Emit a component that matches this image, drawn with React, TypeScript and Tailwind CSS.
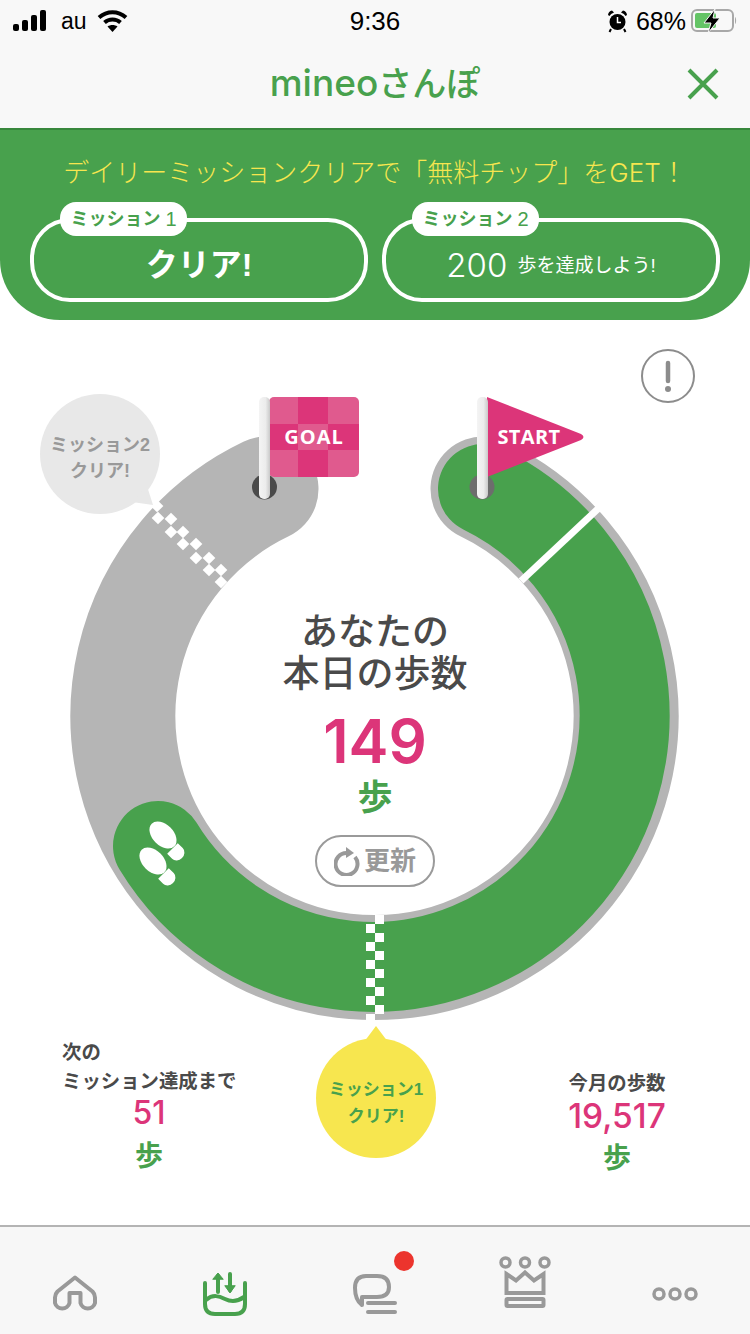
const green = '#48a14d'
const pink = '#dc3579'

// checker squares on the mission 2 line, picked off the picture
const diagonalChecks = [
  [157, 506], [171, 519], [183, 532], [196, 544], [209, 558], [221, 570],
  [158, 518], [171, 532], [183, 544], [196, 558], [209, 570], [221, 582],
]
const bottomChecks = [
  [366, 924], [366, 942], [366, 960], [366, 978], [366, 996], [366, 1014],
  [375, 915], [375, 933], [375, 951], [375, 969], [375, 987], [375, 1005],
]

function StatusBar() {
  return (
    <div className="relative flex h-[42px] items-center justify-between pl-[13px] pr-[13px] text-black">
      <div className="flex items-center">
        <svg width="34" height="22" viewBox="0 0 34 22" fill="#000">
          <rect x="0" y="14" width="6" height="7" rx="2" />
          <rect x="9" y="10" width="6" height="11" rx="2" />
          <rect x="18" y="5" width="6" height="16" rx="2" />
          <rect x="27" y="0" width="6" height="21" rx="2" />
        </svg>
        <span className="ml-[14px] text-[23px] leading-none">au</span>
        <svg className="ml-[10px]" width="31" height="24" viewBox="0 0 31 24" fill="none" stroke="#000" strokeWidth="4">
          <path d="M2 8.5C10 1.5 21 1.5 29 8.5" />
          <path d="M7.5 13.5C12 9.5 19 9.5 23.5 13.5" />
          <path d="M15.5 23L10.5 17.5C13.5 15.5 17.5 15.5 20.5 17.5Z" fill="#000" stroke="none" />
        </svg>
      </div>
      <span className="absolute left-0 right-0 text-center text-[26px] font-medium leading-none">9:36</span>
      <div className="flex items-center">
        <svg width="21" height="24" viewBox="0 0 21 24" fill="#000">
          <circle cx="10.5" cy="13" r="8" />
          <path d="M1 6Q1.5 2 5 1.5L7 3.5Q3.5 4.5 2.5 7Z" />
          <path d="M20 6Q19.5 2 16 1.5L14 3.5Q17.5 4.5 18.5 7Z" />
          <path d="M4 20L2.5 23M17 20L18.5 23" stroke="#000" strokeWidth="2" />
          <path d="M10.5 8V13.5H14" fill="none" stroke="#fff" strokeWidth="1.5" />
        </svg>
        <span className="ml-[8px] text-[25px] leading-none">68%</span>
        <svg className="ml-[5px]" width="46" height="24" viewBox="0 0 46 24">
          <rect x="1" y="1" width="41" height="21" rx="5" fill="none" stroke="#a8a8a8" strokeWidth="2" />
          <rect x="4" y="4" width="21" height="15" rx="2" fill="#64c466" />
          <path d="M44 8C45.5 9 45.5 14 44 15Z" fill="#a8a8a8" />
          <path d="M24 0L13 14H20L17 24L29 9H22Z" fill="#000" stroke="#f8f8f8" strokeWidth="1" />
        </svg>
      </div>
    </div>
  )
}

function MissionBox({ label, num, children }: { label: string; num: string; children: React.ReactNode }) {
  return (
    <div className="relative flex h-[84px] flex-1 items-center justify-center rounded-[40px] border-[4px] border-white pt-[10px] text-white">
      <div className="absolute left-[26px] top-[-20px] flex h-[34px] w-[127px] items-center justify-center rounded-[16px] bg-white text-[#48a14d]">
        <span className="text-[18px] font-bold leading-none">{label}</span>
        <span className="ml-[5px] text-[20px] leading-none">{num}</span>
      </div>
      {children}
    </div>
  )
}

function Track() {
  return (
    <svg className="absolute inset-0" width="750" height="710" viewBox="0 320 750 710">
      {/* course */}
      <path d="M483 489A251.6 251.6 0 1 1 266 489" fill="none" stroke="#b5b5b5" strokeWidth="105" strokeLinecap="round" />
      <path d="M483 489A251.6 251.6 0 1 1 158 846" fill="none" stroke={green} strokeWidth="90" strokeLinecap="round" />
      <path d="M521 581L601 506" stroke="#fff" strokeWidth="7" />

      {bottomChecks.map(([x, y]) => (
        <rect key={`${x}-${y}`} x={x} y={y} width="9" height="9" fill="#fff" />
      ))}
      {diagonalChecks.map(([x, y]) => (
        <rect key={`${x}-${y}`} x={x - 4.5} y={y - 4.5} width="9" height="9" fill="#fff" transform={`rotate(45 ${x} ${y})`} />
      ))}

      {/* mission 2 bubble */}
      <circle cx="100" cy="454" r="60" fill="#e8e8e8" />
      <path d="M147 486L153 505L132 502Z" fill="#e8e8e8" />
      <text x="100" y="451" textAnchor="middle" fontSize="18" fontWeight="700" fill="#999">ミッション2</text>
      <text x="100" y="477" textAnchor="middle" fontSize="18" fontWeight="700" fill="#999">クリア!</text>

      {/* feet */}
      <g fill="#fff">
        <ellipse cx="163" cy="835" rx="16" ry="10.5" transform="rotate(45 163 835)" />
        <ellipse cx="153" cy="861" rx="16" ry="10.5" transform="rotate(45 153 861)" />
        <path d="M-5 -7.5H2A6.5 7.5 0 0 1 2 7.5H-5Z" transform="translate(176 852) rotate(45)" />
        <path d="M-5 -7.5H2A6.5 7.5 0 0 1 2 7.5H-5Z" transform="translate(167 877) rotate(45)" />
      </g>

      {/* goal flag */}
      <circle cx="264.5" cy="487" r="12.5" fill="#4a4a4a" />
      <rect x="269" y="397" width="90" height="80" rx="5" fill="#e05a8e" />
      <rect x="298" y="397" width="30" height="27" fill={pink} />
      <rect x="298" y="450" width="30" height="27" fill={pink} />
      <rect x="269" y="424" width="29" height="26" fill={pink} />
      <rect x="328" y="424" width="31" height="26" fill={pink} />
      <text x="314" y="444" textAnchor="middle" fontSize="20" fontWeight="700" fill="#fff" fontFamily="Open Sans" letterSpacing="1">GOAL</text>
      <rect x="259" y="397" width="11" height="102" rx="5" fill="url(#pole)" />

      {/* start flag */}
      <circle cx="482" cy="487" r="12.5" fill="#6d6d6d" />
      <path d="M487 397L581 434Q586 437 581 440L487 477Z" fill={pink} />
      <text x="529" y="444" textAnchor="middle" fontSize="20" fontWeight="700" fill="#fff" fontFamily="Open Sans" letterSpacing="0.4">START</text>
      <rect x="477" y="397" width="11" height="102" rx="5" fill="url(#pole)" />

      {/* info */}
      <circle cx="668" cy="376" r="26" fill="none" stroke="#8c8c8c" strokeWidth="2" />
      <path d="M668 363V381" stroke="#8c8c8c" strokeWidth="4.5" strokeLinecap="round" />
      <circle cx="668" cy="389" r="3" fill="#8c8c8c" />

      <defs>
        <linearGradient id="pole" x1="0" x2="1" y1="0" y2="0">
          <stop offset="0" stopColor="#f4f4f4" />
          <stop offset="0.6" stopColor="#ececec" />
          <stop offset="1" stopColor="#c9c9c9" />
        </linearGradient>
      </defs>
    </svg>
  )
}

function TabBar() {
  return (
    <div className="grid h-[109px] grid-cols-5 justify-items-center border-t-2 border-[#b4b4b4] bg-[#f7f7f7]">
      <svg className="mt-[48px]" width="44" height="40" viewBox="0 0 44 40" fill="none" stroke="#999" strokeWidth="4" strokeLinejoin="round">
        <path d="M22 2.5L39.5 16.5Q42 19 42 22.5V28A7.5 7.5 0 0 1 27.5 28V18H16.5V28A7.5 7.5 0 0 1 2 28V22.5Q2 19 4.5 16.5Z" />
      </svg>
      <svg className="mt-[43px]" width="44" height="46" viewBox="0 0 44 46" fill="none" stroke={green} strokeWidth="4" strokeLinecap="round">
        <path d="M2 13V34Q2 44 12 44H32Q42 44 42 34V13" />
        <path d="M3 30C10 24 16 26 22 29C28 32 34 32 41 27" />
        <path d="M15 6V22M27 4V20" />
        <path d="M10 9L15 3L20 9Z" fill={green} strokeWidth="1" strokeLinejoin="round" />
        <path d="M22 16L27 23L32 16Z" fill={green} strokeWidth="1" strokeLinejoin="round" />
      </svg>
      <div className="relative mt-[47px] h-[40px] w-[44px]">
        <svg width="44" height="40" viewBox="0 0 44 40" fill="none" stroke="#999" strokeWidth="4" strokeLinecap="round" strokeLinejoin="round">
          <path d="M13 2H24Q36 2 36 13Q36 23 24 23H9V31Q2 26 2 14Q2 2 13 2Z" />
          <path d="M15 29H42M15 38H42" />
        </svg>
        <div className="absolute left-[41px] top-[-23px] h-[20px] w-[20px] rounded-full bg-[#ec342d]" />
      </div>
      <svg className="mt-[29px]" width="52" height="52" viewBox="0 0 52 52" fill="none" stroke="#999" strokeWidth="3.5">
        <circle cx="6.5" cy="6.5" r="4.5" />
        <circle cx="26" cy="6.5" r="4.5" />
        <circle cx="45.5" cy="6.5" r="4.5" />
        <path d="M7.5 18L17 24.5L26 16.5L35 24.5L44.5 18V37H7.5Z" strokeWidth="4" />
        <rect x="7.5" y="43" width="37" height="7" rx="1" strokeWidth="4" />
      </svg>
      <svg className="mt-[59px]" width="46" height="16" viewBox="0 0 46 16" fill="none" stroke="#999" strokeWidth="3.5">
        <circle cx="7" cy="8" r="5" />
        <circle cx="23" cy="8" r="5" />
        <circle cx="39" cy="8" r="5" />
      </svg>
    </div>
  )
}

export default function App() {
  return (
    <div className="flex h-[1334px] w-[750px] flex-col overflow-hidden bg-white [font-family:'Liberation_Sans','Noto_Sans_CJK_JP',sans-serif]">
      <div className="h-[128px] bg-[#f8f8f8]">
        <StatusBar />
        <div className="relative flex h-[86px] items-center justify-center pb-[6px]">
          <span className="flex items-baseline font-medium leading-none text-[#48a14d]">
            <span className="text-[37px] [font-family:Inter,sans-serif]">mineo</span>
            <span className="text-[34px]">さんぽ</span>
          </span>
          <svg className="absolute right-[31px] top-[26px]" width="32" height="32" viewBox="0 0 32 32" stroke="#48a14d" strokeWidth="4">
            <path d="M2 2L30 30M30 2L2 30" />
          </svg>
        </div>
      </div>

      {/* daily missions */}
      <div className="h-[192px] rounded-b-[60px] border-t-2 border-[#37873c] bg-[#48a14d] px-[30px] pt-[25px]">
        <p className="h-[36px] text-center text-[26px] font-light leading-[36px] text-[#f7e64f] [font-family:Inter,'Noto_Sans_CJK_JP',sans-serif]">デイリーミッションクリアで「無料チップ」をGET！</p>
        <div className="mt-[27px] flex gap-[14px]">
          <MissionBox label="ミッション" num="1">
            <span className="text-[32px] font-bold leading-none">クリア!</span>
          </MissionBox>
          <MissionBox label="ミッション" num="2">
            <span className="text-[33px] font-light leading-none [font-family:Inter,sans-serif]">200</span>
            <span className="ml-[10px] text-[19px] leading-none">歩を達成しよう!</span>
          </MissionBox>
        </div>
      </div>

      <div className="relative flex h-[710px] flex-col items-center pt-[292px] text-[#4a4a4a]">
        <Track />
        <div className="relative flex flex-col items-center">
          <p className="text-center text-[37px] font-medium leading-[42px]">あなたの<br />本日の歩数</p>
          <span className="mt-[14px] text-[60px] font-semibold leading-[62px] text-[#dc3579] [font-family:Inter,sans-serif]">149</span>
          <span className="mt-[4px] text-[35px] font-bold leading-[44px] text-[#48a14d]">歩</span>
          <button className="mt-[15px] flex h-[52px] w-[120px] items-center justify-center rounded-full border-2 border-[#9a9a9a] text-[26px] font-bold text-[#999]">
            <svg width="28" height="30" viewBox="0 0 28 30" fill="none" stroke="#999" strokeWidth="4">
              <path d="M21 11A11 11 0 1 1 13 7" />
              <path d="M12 1L20 7L12 12Z" fill="#999" stroke="none" />
            </svg>
            <span className="ml-[2px] leading-none">更新</span>
          </button>
        </div>
      </div>

      {/* step totals */}
      <div className="flex h-[195px] flex-1 items-start">
        <div className="ml-[62px] mt-[8px] w-[174px] text-[19.4px] font-bold leading-[29px] text-[#4a4a4a]">
          <p>次の</p>
          <p className="whitespace-nowrap">ミッション達成まで</p>
          <p className="text-center text-[32px] font-medium leading-[34px] text-[#dc3579] [font-family:Inter,sans-serif]">51</p>
          <p className="mt-[7px] text-center text-[28px] leading-[40px] text-[#48a14d]">歩</p>
        </div>
        <div className="relative ml-[80px] mt-[8px] flex h-[120px] w-[120px] flex-col items-center justify-center rounded-full bg-[#f7e64f] pt-[10px] text-[17px] font-bold leading-[27px] text-[#48a14d]">
          <svg className="absolute left-[48px] top-[-12px]" width="24" height="16" viewBox="0 0 24 16" fill="#f7e64f">
            <path d="M12 0L24 16H0Z" />
          </svg>
          <p>ミッション1</p>
          <p>クリア!</p>
        </div>
        <div className="ml-[126px] mt-[39px] flex w-[110px] flex-col items-center">
          <p className="whitespace-nowrap text-[19.4px] font-bold leading-[29px] text-[#4a4a4a]">今月の歩数</p>
          <p className="text-[33.5px] font-medium leading-[36px] text-[#dc3579] [font-family:Inter,sans-serif]">19,517</p>
          <p className="mt-[5px] text-[28px] font-bold leading-[40px] text-[#48a14d]">歩</p>
        </div>
      </div>

      <TabBar />
    </div>
  )
}
